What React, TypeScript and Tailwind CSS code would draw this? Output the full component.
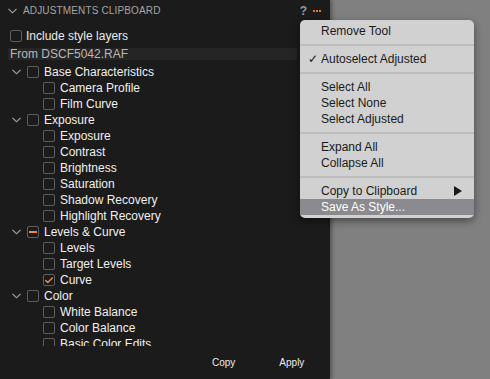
import { Check } from 'lucide-react'

type Row = { label: string; level: 0 | 1; state?: 'off' | 'mixed' | 'on' }

const rows: Row[] = [
  { label: 'Base Characteristics', level: 0 },
  { label: 'Camera Profile', level: 1 },
  { label: 'Film Curve', level: 1 },
  { label: 'Exposure', level: 0 },
  { label: 'Exposure', level: 1 },
  { label: 'Contrast', level: 1 },
  { label: 'Brightness', level: 1 },
  { label: 'Saturation', level: 1 },
  { label: 'Shadow Recovery', level: 1 },
  { label: 'Highlight Recovery', level: 1 },
  { label: 'Levels & Curve', level: 0, state: 'mixed' },
  { label: 'Levels', level: 1 },
  { label: 'Target Levels', level: 1 },
  { label: 'Curve', level: 1, state: 'on' },
  { label: 'Color', level: 0 },
  { label: 'White Balance', level: 1 },
  { label: 'Color Balance', level: 1 },
  { label: 'Basic Color Edits', level: 1 },
]

function Chevron() {
  return (
    <svg width="9" height="6" viewBox="0 0 9 6" className="shrink-0">
      <path d="M0.5 0.8 L4.5 4.8 L8.5 0.8" fill="none" stroke="#a8a8a8" strokeWidth="1.1" />
    </svg>
  )
}

function Box({ state = 'off' }: { state?: Row['state'] }) {
  return (
    <div className="w-[12px] h-[12px] shrink-0 rounded-[2px] border border-[#5e5e5e] flex items-center justify-center">
      {state === 'mixed' && <div className="w-[8px] h-[2px] bg-[#f08a3c]" />}
      {state === 'on' && <Check size={11} strokeWidth={3.5} color="#f08a3c" />}
    </div>
  )
}

const menu: (string | null)[] = [
  'Remove Tool',
  null,
  'Autoselect Adjusted',
  null,
  'Select All',
  'Select None',
  'Select Adjusted',
  null,
  'Expand All',
  'Collapse All',
  null,
  'Copy to Clipboard',
  'Save As Style...',
]

export default function App() {
  return (
    <div className="relative flex w-[490px] h-[379px] overflow-hidden bg-[#808080] font-['Liberation_Sans',Arial,sans-serif]">
      <div className="w-[330px] h-full bg-[#1b1b1b] flex flex-col shadow-[2px_0_4px_rgba(0,0,0,0.35)]">
        <div className="h-[21px] flex items-center pl-[8px] pr-[9px]">
          <Chevron />
          <span className="ml-[6px] text-[10px] text-[#a5a5a5] tracking-[0.15px]">ADJUSTMENTS CLIPBOARD</span>
          <span className="ml-auto text-[12px] font-bold text-[#9a9a9a]">?</span>
          <div className="ml-[6px] flex gap-[1px]">
            <div className="w-[2px] h-[2px] bg-[#e0772f]" />
            <div className="w-[2px] h-[2px] bg-[#e0772f]" />
            <div className="w-[2px] h-[2px] bg-[#e0772f]" />
          </div>
        </div>
        <div className="h-[27px] flex items-center pl-[10px] pt-[2px]">
          <Box />
          <span className="ml-[4px] text-[12px] text-[#ececec]">Include style layers</span>
        </div>
        <div className="h-[12px] ml-[8px] mr-[33px] bg-[#252525] flex items-center pl-[2px]">
          <span className="text-[12px] text-[#b8b8b8] leading-none">From DSCF5042.RAF</span>
        </div>
        <div className="h-[286px] overflow-hidden pt-[4px]">
          {rows.map((r, i) => (
            <div
              key={i}
              className={`h-[16px] flex items-center ${r.level === 0 ? 'pl-[12px]' : 'pl-[43px]'}`}
            >
              {r.level === 0 && (
                <div className="w-[15px]">
                  <Chevron />
                </div>
              )}
              <Box state={r.state} />
              <span className="ml-[5px] text-[12px] text-[#f0f0f0] whitespace-nowrap">{r.label}</span>
            </div>
          ))}
        </div>
        <div className="flex-1 flex items-center text-[10px] text-[#eeeeee]">
          <span className="ml-[212px]">Copy</span>
          <span className="ml-[44px]">Apply</span>
        </div>
      </div>

      <div className="absolute left-[300px] top-[20px] w-[174px] rounded-[5px] bg-[#d1d1d1] shadow-[0_3px_8px_rgba(0,0,0,0.45)] pt-[3px] pb-[3px] text-[12px] text-[#1a1a1a]">
        {menu.map((m, i) =>
          m === null ? (
            <div key={i} className="h-[12px] flex items-center">
              <div className="h-[2px] w-full bg-[#bdbdbd]" />
            </div>
          ) : (
            <div
              key={i}
              className={`h-[16px] flex items-center pl-[21px] pr-[12px] relative ${
                m === 'Save As Style...' ? 'bg-[#8b8a8f] text-white' : ''
              }`}
            >
              {m === 'Autoselect Adjusted' && (
                <span className="absolute left-[8px] text-[12px]">✓</span>
              )}
              <span>{m}</span>
              {m === 'Copy to Clipboard' && (
                <svg width="8" height="10" viewBox="0 0 8 10" className="ml-auto">
                  <path d="M0 0 L8 5 L0 10 Z" fill="#1a1a1a" />
                </svg>
              )}
            </div>
          ),
        )}
      </div>
    </div>
  )
}
